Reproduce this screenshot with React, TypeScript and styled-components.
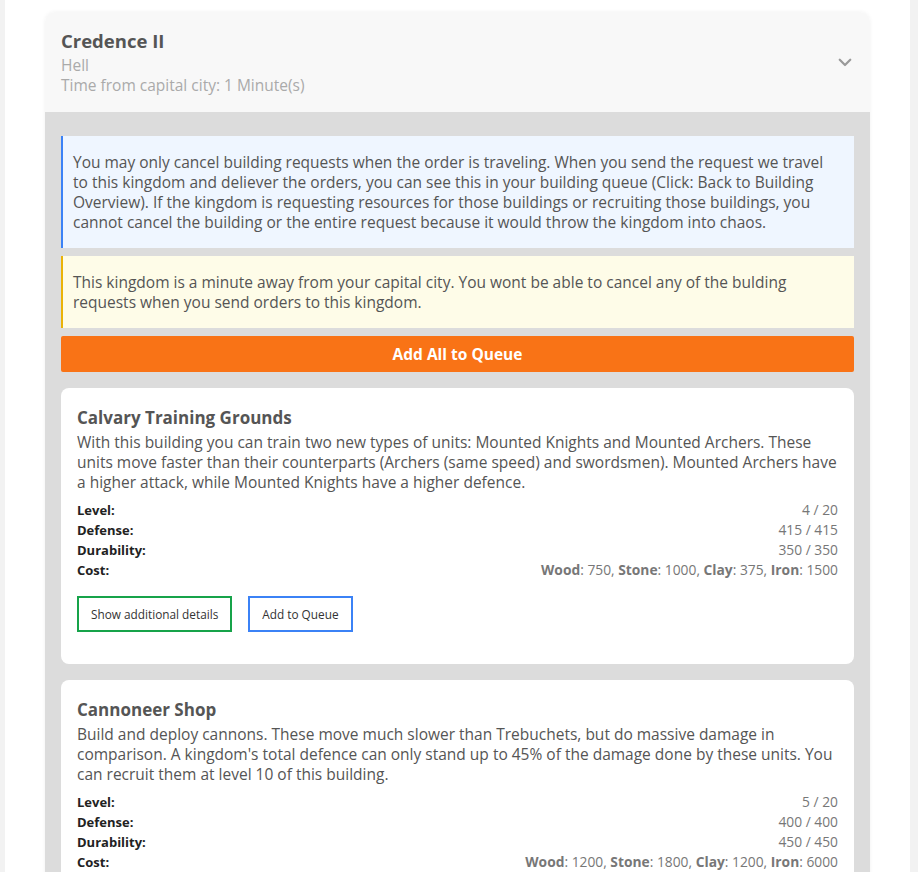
import styled, { createGlobalStyle } from "styled-components";

const GlobalStyle = createGlobalStyle`
  html, body {
    margin: 0;
    padding: 0;
    background: #f2f2f2;
    font-family: "Open Sans", "Noto Sans", sans-serif;
  }
`;

const Page = styled.div`
  margin: 0 8px 0 5px;
  min-height: 872px;
  background: #ffffff;
  padding: 12px 40px 0 40px;
  box-sizing: border-box;
`;

const Accordion = styled.div`
  border-radius: 10px 10px 0 0;
  box-shadow: 0 0 4px rgba(0, 0, 0, 0.06);
  overflow: hidden;
`;

const Header = styled.div`
  background: #f8f8f8;
  height: 100px;
  box-sizing: border-box;
  padding: 15px 16px 0 16px;
  display: flex;
  align-items: center;
  justify-content: space-between;
`;

const HeaderText = styled.div`
  display: flex;
  flex-direction: column;
  align-self: flex-start;
`;

const Title = styled.h2`
  margin: 0;
  font-size: 18.5px;
  line-height: 28px;
  font-weight: 700;
  color: #555;
`;

const Sub = styled.div`
  font-size: 15.5px;
  line-height: 20px;
  color: #aaa;
`;

const Chevron = styled.svg`
  width: 18px;
  height: 18px;
  margin-top: -16px;
`;

const Body = styled.div`
  background: #dcdcdc;
  padding: 24px 16px 16px 16px;
  display: flex;
  flex-direction: column;
`;

const Alert = styled.div<{ $tone: "info" | "warn" }>`
  border-left: 2px solid
    ${(p) => (p.$tone === "info" ? "#3b82f6" : "#eab308")};
  background: ${(p) => (p.$tone === "info" ? "#eff6ff" : "#fefce8")};
  padding: 16px 16px 16px 10px;
  font-size: 15.5px;
  line-height: 20px;
  color: #555;
  margin-bottom: 8px;
`;

const OrangeButton = styled.button`
  height: 36px;
  border: none;
  border-radius: 2px;
  background: #f97316;
  color: #fff;
  font-family: inherit;
  font-weight: 700;
  font-size: 15.5px;
  margin-bottom: 16px;
  cursor: pointer;
`;

const Card = styled.div`
  background: #fff;
  border-radius: 8px;
  padding: 16px 16px 32px 16px;
  margin-bottom: 16px;
`;

const CardTitle = styled.h3`
  margin: 0;
  font-size: 17px;
  line-height: 28px;
  font-weight: 700;
  color: #555;
`;

const Desc = styled.p`
  margin: 0;
  font-size: 15.5px;
  line-height: 20px;
  color: #555;
`;

const Stats = styled.dl`
  margin: 8px 0 0 0;
  display: grid;
  grid-template-columns: auto 1fr;
  font-size: 13px;
  line-height: 20px;
`;

const Label = styled.dt`
  font-weight: 700;
  color: #222;
`;

const Value = styled.dd`
  margin: 0;
  text-align: right;
  color: #777;
  font-size: 13.8px;

  b {
    font-weight: 700;
  }
`;

const Actions = styled.div`
  display: flex;
  gap: 16px;
  margin-top: 16px;
`;

const OutlineButton = styled.button<{ $color: string }>`
  height: 36px;
  padding: 0 12px;
  background: #fff;
  border: 2px solid ${(p) => p.$color};
  font-family: inherit;
  font-size: 11.8px;
  color: #333;
  cursor: pointer;
`;

type Building = {
  name: string;
  description: string;
  level: string;
  defense: string;
  durability: string;
  cost: [string, number][];
};

const buildings: Building[] = [
  {
    name: "Calvary Training Grounds",
    description:
      "With this building you can train two new types of units: Mounted Knights and Mounted Archers. These units move faster than their counterparts (Archers (same speed) and swordsmen). Mounted Archers have a higher attack, while Mounted Knights have a higher defence.",
    level: "4 / 20",
    defense: "415 / 415",
    durability: "350 / 350",
    cost: [
      ["Wood", 750],
      ["Stone", 1000],
      ["Clay", 375],
      ["Iron", 1500],
    ],
  },
  {
    name: "Cannoneer Shop",
    description:
      "Build and deploy cannons. These move much slower than Trebuchets, but do massive damage in comparison. A kingdom's total defence can only stand up to 45% of the damage done by these units. You can recruit them at level 10 of this building.",
    level: "5 / 20",
    defense: "400 / 400",
    durability: "450 / 450",
    cost: [
      ["Wood", 1200],
      ["Stone", 1800],
      ["Clay", 1200],
      ["Iron", 6000],
    ],
  },
];

const App = () => {
  return (
    <>
      <GlobalStyle />
      <Page>
        <Accordion>
          <Header>
            <HeaderText>
              <Title>Credence II</Title>
              <Sub>Hell</Sub>
              <Sub>Time from capital city: 1 Minute(s)</Sub>
            </HeaderText>
            <Chevron viewBox="0 0 24 24" fill="none" stroke="#9a9a9a" strokeWidth="3" strokeLinecap="round" strokeLinejoin="round">
              <path d="M5 9l7 7 7-7" />
            </Chevron>
          </Header>
          <Body>
            <Alert $tone="info">
              You may only cancel building requests when the order is traveling. When you send the request we travel to this kingdom and deliever the orders, you can see this in your building queue (Click: Back to Building Overview). If the kingdom is requesting resources for those buildings or recruiting those buildings, you cannot cancel the building or the entire request because it would throw the kingdom into chaos.
            </Alert>
            <Alert $tone="warn">
              This kingdom is a minute away from your capital city. You wont be able to cancel any of the bulding requests when you send orders to this kingdom.
            </Alert>
            <OrangeButton>Add All to Queue</OrangeButton>
            {buildings.map((b) => (
              <Card key={b.name}>
                <CardTitle>{b.name}</CardTitle>
                <Desc>{b.description}</Desc>
                <Stats>
                  <Label>Level:</Label>
                  <Value>{b.level}</Value>
                  <Label>Defense:</Label>
                  <Value>{b.defense}</Value>
                  <Label>Durability:</Label>
                  <Value>{b.durability}</Value>
                  <Label>Cost:</Label>
                  <Value>
                    {b.cost.map(([k, v], i) => (
                      <span key={k}>
                        <b>{k}</b>: {v}
                        {i < b.cost.length - 1 ? ", " : ""}
                      </span>
                    ))}
                  </Value>
                </Stats>
                <Actions>
                  <OutlineButton $color="#16a34a">Show additional details</OutlineButton>
                  <OutlineButton $color="#3b82f6">Add to Queue</OutlineButton>
                </Actions>
              </Card>
            ))}
          </Body>
        </Accordion>
      </Page>
    </>
  );
};

export default App;
